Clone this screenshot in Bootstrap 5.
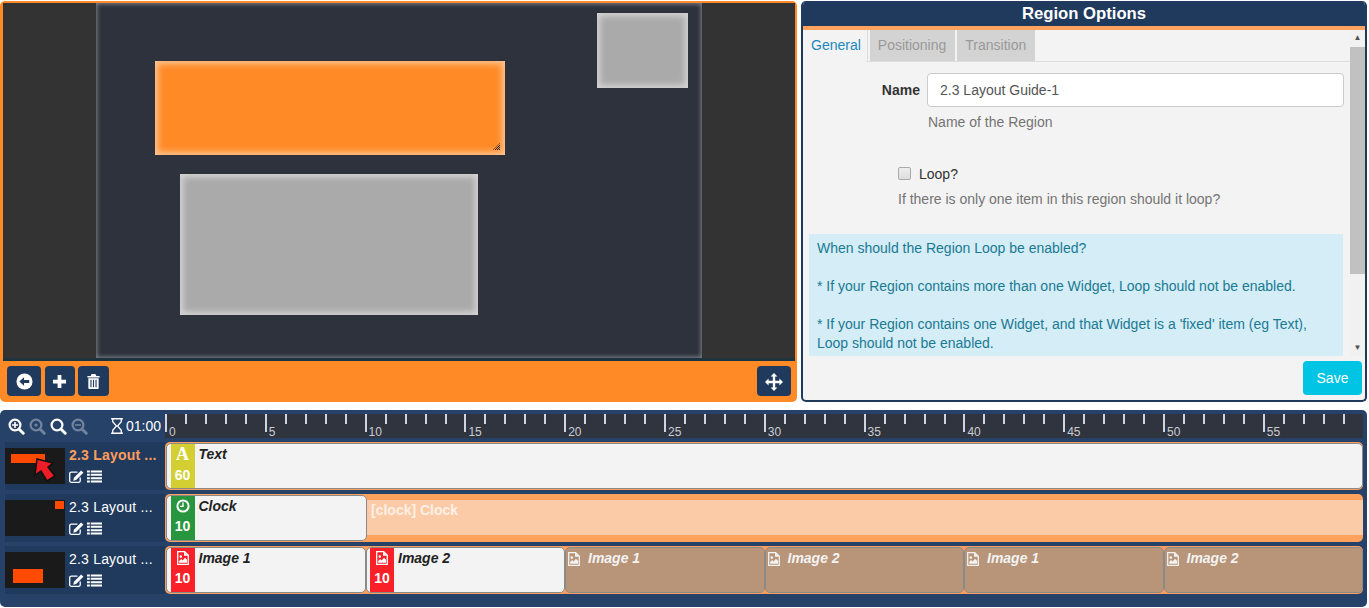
<!DOCTYPE html>
<html lang="en">
  <head>
    <meta charset="utf-8" />
    <meta name="viewport" content="width=device-width, initial-scale=1.0" />
    <title>Layout Designer</title>
    <link
      href="https://cdn.jsdelivr.net/npm/bootstrap@5.3.0/dist/css/bootstrap.min.css"
      rel="stylesheet"
    />
    <style>
      html,
      body {
        height: 100%;
        margin: 0;
        background-color: #fff;
        font-family: "Liberation Sans", Arial, sans-serif;
        font-size: 14px;
        overflow: hidden;
      }
      .page-wrap {
        width: 1369px;
        height: 608px;
      }
      .top-area {
        height: 402px;
        gap: 4px;
        margin-right: 2px;
        padding-top: 1px;
      }
      /* left: viewer */
      .viewer-panel {
        width: 797px;
        background-color: #ff8a26;
        border-radius: 5px;
        padding: 2px 2px 3px 3px;
      }
      .viewer-stage {
        height: 358px;
        background-color: #333;
        border-bottom: 3px solid #1b3440;
      }
      .layout-canvas {
        position: relative;
        width: 606px;
        height: 355px;
        margin-left: 93px;
        background-color: #2d323c;
        box-shadow: inset 0 0 4px 1px rgba(255, 255, 255, 0.4);
      }
      .region-box {
        position: absolute;
        background-color: #aaa;
        box-shadow: inset 0 0 6px 3px rgba(255, 255, 255, 0.5);
      }
      .region-a {
        left: 59px;
        top: 58px;
        width: 350px;
        height: 94px;
        background-color: #ff8a26;
      }
      .region-b {
        left: 501px;
        top: 10px;
        width: 91px;
        height: 75px;
      }
      .region-c {
        left: 84px;
        top: 171px;
        width: 298px;
        height: 141px;
      }
      .resize-grip {
        position: absolute;
        right: 5px;
        bottom: 5px;
      }
      .viewer-tools {
        padding: 5px 4px 0;
      }
      .tool-btn {
        width: 34px;
        height: 30px;
        padding: 0;
        background-color: #203a5e;
        border: 0;
        border-radius: 4px;
      }
      .tool-btn:hover {
        background-color: #203a5e;
      }
      .tool-add {
        width: 30px;
      }
      .tool-del {
        width: 31px;
      }
      /* right: options */
      .options-panel {
        flex: 1;
        border: 2px solid #203a5e;
        border-top: 0;
        border-radius: 5px;
        background-color: #f3f3f3;
        overflow: hidden;
      }
      .options-title {
        height: 29px;
        background-color: #203a5e;
        border-bottom: 4px solid #ffa25e;
        color: #fff;
        font-size: 16.7px;
        font-weight: 700;
        line-height: 25px;
        text-align: center;
      }
      .options-scroll {
        height: 326px;
      }
      .options-body {
        flex: 1;
        overflow: hidden;
      }
      .tab-row {
        height: 32px;
        gap: 2px;
        border-bottom: 1px solid #ddd;
      }
      .tab-item {
        padding: 0 9px 0 8px;
        line-height: 31px;
        color: #999;
        background-color: #d3d3d3;
      }
      .tab-active {
        padding: 0 6px 0 8px;
        color: #1a87bd;
        background-color: #f3f3f3;
        height: 32px;
        border-right: 1px solid #ddd;
      }
      .field-label {
        width: 117px;
        margin-right: 7px;
        text-align: right;
        font-weight: 700;
        color: #333;
        line-height: 34px;
      }
      .field-input {
        width: 417px;
        height: 34px;
        padding: 6px 12px;
        font-size: 14px;
        color: #555;
        border-color: #ccc;
        border-radius: 4px;
      }
      .help-line {
        color: #737373;
      }
      .name-help {
        margin: 5px 0 0 125px;
        line-height: 20px;
      }
      .loop-row {
        margin: 32px 0 0 95px;
        line-height: 20px;
      }
      .loop-help {
        margin: 5px 0 25px 95px;
        line-height: 20px;
      }
      .loop-check {
        width: 13px;
        height: 13px;
        margin: 0 8px 0 0;
        border: 1px solid #aaa;
        border-radius: 2px;
        background: linear-gradient(#eee, #ddd);
      }
      .loop-label {
        color: #333;
      }
      .info-box {
        width: 534px;
        margin-left: 6px;
        padding: 5px 8px;
        background-color: #d4edf6;
        color: #1a7a94;
        line-height: 19px;
      }
      .info-box p {
        margin: 0 0 19px;
      }
      .fake-scrollbar {
        width: 15px;
        background-color: #f1f1f1;
      }
      .scroll-thumb {
        height: 227px;
        margin-top: 1px;
        background-color: #c1c1c1;
      }
      .scroll-arrow {
        height: 16px;
        line-height: 16px;
        font-size: 8px;
        color: #505050;
        text-align: center;
      }
      .save-btn {
        width: 59px;
        height: 34px;
        padding: 0;
        margin: 5px 3px 0 auto;
        display: block;
        background-color: #00c4e3;
        border: 0;
        border-radius: 4px;
        color: #fff;
        font-size: 14px;
      }
      /* bottom: timeline */
      .timeline-panel {
        height: 197px;
        margin: 8px 2px 0 0;
        padding: 4px 4px 0 5px;
        background-color: #274269;
        border-radius: 5px;
      }
      .time-head {
        height: 24px;
      }
      .zoom-tools {
        width: 160px;
        gap: 4px;
        padding-left: 3px;
        padding-right: 4px;
        color: #fff;
      }
      .zoom-off {
        opacity: 0.35;
      }
      .time-total {
        margin-left: auto;
        gap: 3px;
        font-size: 14px;
      }
      .time-ruler {
        flex: 1;
        background-color: #30343f;
        color: #c9ccd2;
        font-size: 12px;
      }
      .ruler-seg {
        width: 99.8px;
        flex: none;
        padding: 12px 0 0 4px;
        line-height: 13px;
        background-image: linear-gradient(#d0d4dc, #d0d4dc),
          linear-gradient(#d0d4dc, #d0d4dc), linear-gradient(#d0d4dc, #d0d4dc),
          linear-gradient(#d0d4dc, #d0d4dc), linear-gradient(#d0d4dc, #d0d4dc);
        background-repeat: no-repeat;
        background-size: 2px 18px, 2px 10px, 2px 10px, 2px 10px, 2px 10px;
        background-position: 0 0, 20px 0, 40px 0, 60px 0, 80px 0;
      }
      .track-row {
        height: 48px;
        margin-top: 4px;
      }
      .track-info {
        width: 160px;
        height: 48px;
        background-color: #203a5e;
        color: #fff;
      }
      .track-thumb {
        position: relative;
        width: 60px;
        height: 36px;
        margin-top: 6px;
        flex: none;
        background-color: #1a1a1a;
      }
      .thumb-mark {
        position: absolute;
        background-color: #ff4a00;
      }
      .mark-a {
        left: 6px;
        top: 6px;
        width: 34px;
        height: 9px;
      }
      .mark-b {
        left: 50px;
        top: 1px;
        width: 9px;
        height: 8px;
      }
      .mark-c {
        left: 8px;
        top: 17px;
        width: 30px;
        height: 14px;
      }
      .thumb-arrow {
        position: absolute;
        left: 28px;
        top: 10px;
      }
      .track-meta {
        padding: 5px 0 0 4px;
        min-width: 0;
      }
      .track-name {
        line-height: 17px;
        white-space: nowrap;
        font-size: 14px;
        letter-spacing: 0.2px;
      }
      .track-current {
        color: #ff9d5c;
        font-weight: 700;
      }
      .track-icons {
        gap: 3px;
        margin-top: 6px;
      }
      .track-lane {
        flex: 1;
        min-width: 0;
        padding: 1px 0 1px 1px;
        background-color: #ff9d5c;
        border-radius: 5px;
      }
      .lane-clock {
        background-color: #ffa25e;
      }
      .widget-cell {
        flex: none;
        width: 199.5px;
        height: 46px;
        display: flex;
        background-color: #f3f3f3;
        border: 1.5px solid #8a8a8a;
        border-radius: 5px;
        overflow: hidden;
        padding-left: 3.5px;
        color: #222;
      }
      .widget-wide {
        width: 100%;
      }
      .widget-clock {
        width: 201px;
      }
      .widget-tag {
        width: 24px;
        flex: none;
        color: #fff;
        font-weight: 700;
        text-align: center;
        line-height: 20px;
      }
      .widget-tag svg {
        display: block;
        margin: 3px auto;
      }
      .tag-text {
        background-color: #d3cf33;
      }
      .tag-letter {
        font-family: "Liberation Serif", serif;
        font-size: 18px;
      }
      .tag-clock {
        background-color: #27963f;
      }
      .tag-image {
        background-color: #fa2027;
      }
      .tag-num {
        display: block;
      }
      .widget-name {
        padding: 2px 0 0 4px;
        font-weight: 700;
        font-style: italic;
        line-height: 17px;
      }
      .widget-loop {
        background-color: #b89478;
        padding-left: 2px;
        color: #f3f3f3;
      }
      .widget-loop .widget-name {
        padding-left: 8px;
      }
      .clock-ghost {
        flex: 1;
        padding: 2px 4px;
        margin: 5px 0 6px;
        background-color: #facba6;
        color: #fdf0e5;
        font-weight: 700;
        line-height: 16px;
      }
    </style>
  </head>
  <body>
    <svg width="0" height="0" class="position-absolute">
      <defs>
        <pattern id="hatch" width="2" height="2" patternUnits="userSpaceOnUse">
          <path fill="#222" d="M0 0h1v1H0zM1 1h1v1H1z" />
        </pattern>
      </defs>
      <symbol id="ic-list" viewBox="0 0 16 13">
        <path fill="#fff" d="M0 0h3v2.2H0zM4 0h12v2.2H4zM0 3.6h3v2.2H0zM4 3.6h12v2.2H4zM0 7.2h3v2.2H0zM4 7.2h12v2.2H4zM0 10.8h3V13H0zM4 10.8h12V13H4z" />
      </symbol>
      <symbol id="ic-edit" viewBox="0 0 16 14">
        <path fill="none" stroke="#fff" stroke-width="1.4" d="M12 8v3.5a1.8 1.8 0 0 1-1.8 1.8H2.5A1.8 1.8 0 0 1 .7 11.5V4a1.8 1.8 0 0 1 1.8-1.8H9" />
        <path fill="#fff" d="M13 .6l2.4 2.4-7.8 7.8-3.1.7.7-3.1z" />
      </symbol>
      <symbol id="ic-image" viewBox="0 0 12 14">
        <path fill="none" stroke="currentColor" stroke-width="1.3" d="M.7.7h7l3.6 3.6v9H.7z" />
        <path fill="currentColor" d="M7 .7v4h4.3zM2.2 11.8V10l2-2 1.4 1.4 2.4-2.6 2 2v3zM3.8 6.9a1.3 1.3 0 1 0 0-2.6 1.3 1.3 0 0 0 0 2.6z" />
      </symbol>
      <symbol id="ic-mag" viewBox="0 0 17 17">
        <circle cx="7" cy="7" r="5.4" fill="none" stroke="currentColor" stroke-width="2.2" />
        <path stroke="currentColor" stroke-width="3" stroke-linecap="round" d="M11.2 11.2l4 4" />
      </symbol>
    </svg>
    <div class="page-wrap">
      <div class="d-flex top-area">
        <div class="viewer-panel">
          <div class="viewer-stage">
            <div class="layout-canvas">
              <div class="region-box region-a">
                <svg class="resize-grip" width="7" height="7" viewBox="0 0 7 7">
                  <path fill="url(#hatch)" d="M7 0v7H0z" />
                </svg>
              </div>
              <div class="region-box region-b"></div>
              <div class="region-box region-c"></div>
            </div>
          </div>
          <div class="viewer-tools d-flex">
            <div class="d-flex gap-1">
              <button class="btn tool-btn" type="button" aria-label="Back">
                <svg width="17" height="17" viewBox="0 0 18 18">
                  <circle cx="9" cy="9" r="8.5" fill="#fff" />
                  <path fill="#203a5e" d="M3.5 9L8.5 4.6v2.9h5.5v3H8.5v2.9z" />
                </svg>
              </button>
              <button class="btn tool-btn tool-add" type="button" aria-label="Add">
                <svg width="15" height="15" viewBox="0 0 16 16">
                  <path fill="#fff" d="M6 1h4v5h5v4h-5v5H6v-5H1V6h5z" />
                </svg>
              </button>
              <button class="btn tool-btn tool-del" type="button" aria-label="Delete">
                <svg width="13" height="15" viewBox="0 0 13 16">
                  <path fill="#fff" fill-rule="evenodd" d="M4.5 0h4l1 2H13v1.6H0V2h3.5zM1 4.6h11V15a1 1 0 0 1-1 1H2a1 1 0 0 1-1-1zM3.2 6v8h1.2V6zm2.7 0v8h1.2V6zm2.7 0v8h1.2V6z" />
                </svg>
              </button>
            </div>
            <button class="btn tool-btn ms-auto" type="button" aria-label="Move">
              <svg width="18" height="18" viewBox="0 0 18 18">
                <path fill="#fff" d="M9 0l3.4 3.6H10.2v4.2h4.2V5.6L18 9l-3.6 3.4v-2.2h-4.2v4.2h2.2L9 18l-3.4-3.6h2.2v-4.2H3.6v2.2L0 9l3.6-3.4v2.2h4.2V3.6H5.6z" />
              </svg>
            </button>
          </div>
        </div>

        <div class="options-panel">
          <div class="options-title">Region Options</div>
          <div class="d-flex options-scroll">
            <div class="options-body">
              <div class="d-flex tab-row">
                <div class="tab-item tab-active">General</div>
                <div class="tab-item">Positioning</div>
                <div class="tab-item">Transition</div>
              </div>
              <div class="d-flex mt-2 pt-1">
                <div class="field-label">Name</div>
                <input class="form-control field-input" type="text" value="2.3 Layout Guide-1" />
              </div>
              <div class="help-line name-help">Name of the Region</div>
              <div class="d-flex align-items-center loop-row">
                <span class="loop-check"></span>
                <span class="loop-label">Loop?</span>
              </div>
              <div class="help-line loop-help">If there is only one item in this region should it loop?</div>
              <div class="info-box">
                <p>When should the Region Loop be enabled?</p>
                <p>* If your Region contains more than one Widget, Loop should not be enabled.</p>
                <p>* If your Region contains one Widget, and that Widget is a 'fixed' item (eg Text), Loop should not be enabled.</p>
              </div>
            </div>
            <div class="fake-scrollbar d-flex flex-column">
              <div class="scroll-arrow">&#9650;</div>
              <div class="scroll-thumb"></div>
              <div class="scroll-arrow mt-auto">&#9660;</div>
            </div>
          </div>
          <button class="btn save-btn" type="button">Save</button>
        </div>
      </div>

      <div class="timeline-panel">
        <div class="d-flex time-head">
          <div class="d-flex align-items-center zoom-tools">
            <svg width="17" height="17" viewBox="0 0 17 17">
              <use href="#ic-mag" />
              <path stroke="#fff" stroke-width="1.6" d="M4 7h6M7 4v6" />
            </svg>
            <svg class="zoom-off" width="17" height="17" viewBox="0 0 17 17">
              <use href="#ic-mag" />
              <circle cx="7" cy="7" r="1.6" fill="#fff" />
            </svg>
            <svg width="17" height="17" viewBox="0 0 17 17"><use href="#ic-mag" /></svg>
            <svg class="zoom-off" width="17" height="17" viewBox="0 0 17 17">
              <use href="#ic-mag" />
              <path stroke="#fff" stroke-width="1.6" d="M4 7h6" />
            </svg>
            <span class="d-flex align-items-center time-total">
              <svg width="12" height="16" viewBox="0 0 11 15">
                <path fill="none" stroke="#fff" stroke-width="1.2" d="M0 .7h11M0 14.3h11M1.5 1v2.5L5 7.5 1.5 11.5V14M9.5 1v2.5L6 7.5l3.5 4V14" />
              </svg>
              01:00
            </span>
          </div>
          <div class="d-flex overflow-hidden time-ruler">
            <div class="ruler-seg">0</div>
            <div class="ruler-seg">5</div>
            <div class="ruler-seg">10</div>
            <div class="ruler-seg">15</div>
            <div class="ruler-seg">20</div>
            <div class="ruler-seg">25</div>
            <div class="ruler-seg">30</div>
            <div class="ruler-seg">35</div>
            <div class="ruler-seg">40</div>
            <div class="ruler-seg">45</div>
            <div class="ruler-seg">50</div>
            <div class="ruler-seg">55</div>
          </div>
        </div>

        <div class="d-flex track-row">
          <div class="d-flex track-info">
            <div class="track-thumb">
              <span class="thumb-mark mark-a"></span>
              <svg class="thumb-arrow" width="24" height="24" viewBox="0 0 24 24">
                <path fill="#ee1c25" stroke="#111" stroke-width="1.5" d="M4 1l16 4-5 4 7 9-8 5-6-10-6 4z" />
              </svg>
            </div>
            <div class="track-meta">
              <div class="track-name track-current">2.3 Layout ...</div>
              <div class="d-flex track-icons">
                <svg width="15" height="13"><use href="#ic-edit" /></svg>
                <svg width="15" height="13"><use href="#ic-list" /></svg>
              </div>
            </div>
          </div>
          <div class="d-flex track-lane">
            <div class="widget-cell widget-wide">
              <div class="widget-tag tag-text"><span class="tag-letter">A</span><span class="tag-num">60</span></div>
              <div class="widget-name">Text</div>
            </div>
          </div>
        </div>

        <div class="d-flex track-row">
          <div class="d-flex track-info">
            <div class="track-thumb"><span class="thumb-mark mark-b"></span></div>
            <div class="track-meta">
              <div class="track-name">2.3 Layout ...</div>
              <div class="d-flex track-icons">
                <svg width="15" height="13"><use href="#ic-edit" /></svg>
                <svg width="15" height="13"><use href="#ic-list" /></svg>
              </div>
            </div>
          </div>
          <div class="d-flex track-lane lane-clock">
            <div class="widget-cell widget-clock">
              <div class="widget-tag tag-clock">
                <svg width="14" height="14" viewBox="0 0 14 14">
                  <circle cx="7" cy="7" r="5.6" fill="none" stroke="#fff" stroke-width="2" />
                  <path fill="none" stroke="#fff" stroke-width="1.4" d="M7 3.6V7.4H4" />
                </svg>
                <span class="tag-num">10</span>
              </div>
              <div class="widget-name">Clock</div>
            </div>
            <div class="clock-ghost">[clock] Clock</div>
          </div>
        </div>

        <div class="d-flex track-row">
          <div class="d-flex track-info">
            <div class="track-thumb"><span class="thumb-mark mark-c"></span></div>
            <div class="track-meta">
              <div class="track-name">2.3 Layout ...</div>
              <div class="d-flex track-icons">
                <svg width="15" height="13"><use href="#ic-edit" /></svg>
                <svg width="15" height="13"><use href="#ic-list" /></svg>
              </div>
            </div>
          </div>
          <div class="d-flex track-lane">
            <div class="widget-cell">
              <div class="widget-tag tag-image">
                <svg width="12" height="14"><use href="#ic-image" /></svg>
                <span class="tag-num">10</span>
              </div>
              <div class="widget-name">Image 1</div>
            </div>
            <div class="widget-cell">
              <div class="widget-tag tag-image">
                <svg width="12" height="14"><use href="#ic-image" /></svg>
                <span class="tag-num">10</span>
              </div>
              <div class="widget-name">Image 2</div>
            </div>
            <div class="widget-cell widget-loop">
              <svg class="mt-1" width="12" height="14"><use href="#ic-image" /></svg>
              <div class="widget-name">Image 1</div>
            </div>
            <div class="widget-cell widget-loop">
              <svg class="mt-1" width="12" height="14"><use href="#ic-image" /></svg>
              <div class="widget-name">Image 2</div>
            </div>
            <div class="widget-cell widget-loop">
              <svg class="mt-1" width="12" height="14"><use href="#ic-image" /></svg>
              <div class="widget-name">Image 1</div>
            </div>
            <div class="widget-cell widget-loop">
              <svg class="mt-1" width="12" height="14"><use href="#ic-image" /></svg>
              <div class="widget-name">Image 2</div>
            </div>
          </div>
        </div>
      </div>
    </div>
    <script src="https://cdn.jsdelivr.net/npm/bootstrap@5.3.0/dist/js/bootstrap.bundle.min.js"></script>
  </body>
</html>
